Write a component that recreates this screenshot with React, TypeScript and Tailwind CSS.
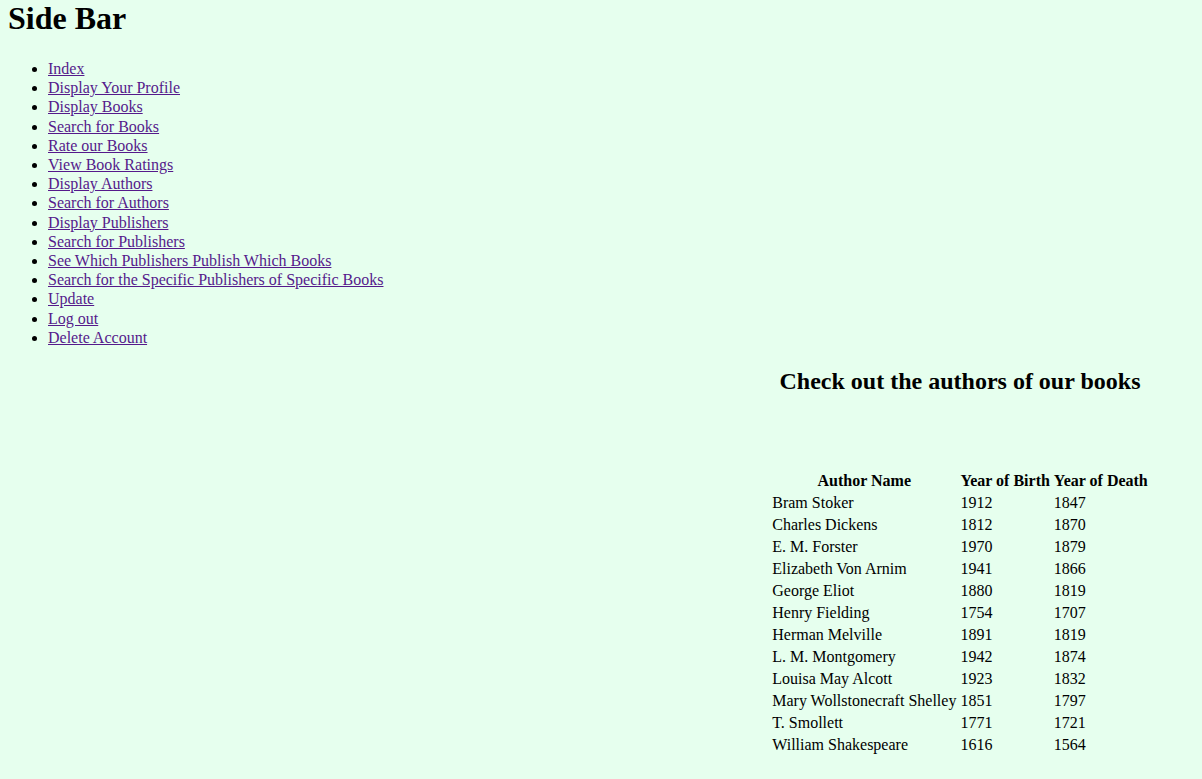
import React from 'react';

const links = [
  'Index',
  'Display Your Profile',
  'Display Books',
  'Search for Books',
  'Rate our Books',
  'View Book Ratings',
  'Display Authors',
  'Search for Authors',
  'Display Publishers',
  'Search for Publishers',
  'See Which Publishers Publish Which Books',
  'Search for the Specific Publishers of Specific Books',
  'Update',
  'Log out',
  'Delete Account',
];

const authors: [string, string, string][] = [
  ['Bram Stoker', '1912', '1847'],
  ['Charles Dickens', '1812', '1870'],
  ['E. M. Forster', '1970', '1879'],
  ['Elizabeth Von Arnim', '1941', '1866'],
  ['George Eliot', '1880', '1819'],
  ['Henry Fielding', '1754', '1707'],
  ['Herman Melville', '1891', '1819'],
  ['L. M. Montgomery', '1942', '1874'],
  ['Louisa May Alcott', '1923', '1832'],
  ['Mary Wollstonecraft Shelley', '1851', '1797'],
  ['T. Smollett', '1771', '1721'],
  ['William Shakespeare', '1616', '1564'],
];

const App = () => {
  return (
    <div className="min-h-screen bg-[#e6ffee] text-black font-['Liberation_Serif','Times_New_Roman',serif] text-[16px] pb-6">
      {/* Sidebar */}
      <div className="px-2">
        <h1 className="text-[32px] font-bold leading-[37px]">Side Bar</h1>
        <ul className="list-disc pl-10 mt-[22px] mb-4">
          {links.map((l) => (
            <li key={l} className="leading-[19.2px]">
              <a href="#" className="text-[#551a8b] underline">
                {l}
              </a>
            </li>
          ))}
        </ul>
      </div>

      {/* Authors */}
      <div className="ml-[720px] w-[480px] flex flex-col items-center">
        <h2 className="text-[24px] font-bold leading-[28px] mt-[4px]">Check out the authors of our books</h2>
        <table className="mt-[74px] border-separate border-spacing-[2px] text-left">
          <thead>
            <tr>
              <th className="p-px leading-[18px] font-bold text-center">Author Name</th>
              <th className="p-px leading-[18px] font-bold text-center">Year of Birth</th>
              <th className="p-px leading-[18px] font-bold text-center">Year of Death</th>
            </tr>
          </thead>
          <tbody>
            {authors.map(([name, born, died]) => (
              <tr key={name}>
                <td className="p-px leading-[18px]">{name}</td>
                <td className="p-px leading-[18px]">{born}</td>
                <td className="p-px leading-[18px]">{died}</td>
              </tr>
            ))}
          </tbody>
        </table>
      </div>
    </div>
  );
};

export default App;
